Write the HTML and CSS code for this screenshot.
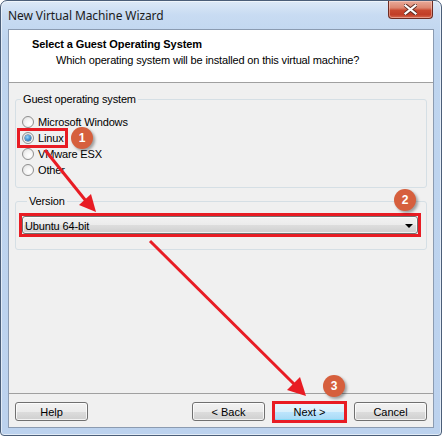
FILE: index.html
```html
<!DOCTYPE html>
<html>
<head>
<meta charset="utf-8">
<link rel="stylesheet" href="styles.css">
</head>
<body>
<div class="window">
  <div class="titlebar">
    <span class="title">New Virtual Machine Wizard</span>
    <div class="close">
      <svg width="13" height="11" viewBox="0 0 13 11">
        <path d="M1.5 1.5 L11.5 9.5 M11.5 1.5 L1.5 9.5" stroke="#5a2a22" stroke-width="4" stroke-linecap="square"/>
        <path d="M1.5 1.5 L11.5 9.5 M11.5 1.5 L1.5 9.5" stroke="#ffffff" stroke-width="2.2" stroke-linecap="square"/>
      </svg>
    </div>
  </div>
  <div class="client">
    <div class="header">
      <div class="h-title">Select a Guest Operating System</div>
      <div class="h-sub">Which operating system will be installed on this virtual machine?</div>
    </div>
    <div class="body">
      <fieldset class="group group-os">
        <legend>Guest operating system</legend>
        <div class="radios">
          <label class="radio"><span class="dot"></span>Microsoft Windows</label>
          <label class="radio mark"><span class="dot checked"></span>Linux</label>
          <label class="radio"><span class="dot"></span>VMware ESX</label>
          <label class="radio"><span class="dot"></span>Other</label>
        </div>
      </fieldset>
      <fieldset class="group group-ver">
        <legend>Version</legend>
        <div class="combo mark-combo">
          <span class="combo-text">Ubuntu 64-bit</span>
          <span class="caret"></span>
        </div>
      </fieldset>
    </div>
    <div class="footer">
      <button class="btn">Help</button>
      <div class="spacer"></div>
      <button class="btn">&lt; Back</button>
      <span class="mark-btn"><button class="btn default">Next &gt;</button></span>
      <button class="btn">Cancel</button>
    </div>
  </div>
  <div class="overlay">
    <svg class="arrows" width="442" height="436" viewBox="0 0 442 436">
      <line x1="45" y1="150" x2="86" y2="201" stroke="#e81c24" stroke-width="3"/>
      <polygon points="96,212 79,205 91,194" fill="#e81c24"/>
      <line x1="150" y1="241" x2="295" y2="385" stroke="#e81c24" stroke-width="3"/>
      <polygon points="306,396 287,390 300,377" fill="#e81c24"/>
    </svg>
    <div class="badge b1">1</div>
    <div class="badge b2">2</div>
    <div class="badge b3">3</div>
  </div>
</div>
</body>
</html>
```

FILE: styles.css
```css
* { box-sizing: border-box; }
html, body { margin: 0; padding: 0; }
body {
  width: 442px;
  height: 436px;
  overflow: hidden;
  background: #ffffff;
  font-family: "Liberation Sans", Arial, sans-serif;
  font-size: 11px;
  letter-spacing: -0.15px;
  color: #000;
}
.window {
  position: relative;
  width: 442px;
  height: 436px;
  border: 1px solid #4b5e78;
  border-radius: 7px 7px 4px 4px;
  background: linear-gradient(to bottom, #dde9f7 0px, #c8dbf2 14px, #bfd5ef 40px, #bcd2ee 100%);
  box-shadow: inset 0 0 0 1px rgba(255, 255, 255, 0.55);
  display: flex;
  flex-direction: column;
  padding: 0 7px 7px 7px;
}
.titlebar {
  height: 28px;
  display: flex;
  align-items: flex-start;
  justify-content: space-between;
}
.title {
  font-family: "Noto Sans", "Open Sans", sans-serif;
  font-size: 12px;
  letter-spacing: -0.1px;
  line-height: 16px;
  padding-top: 7px;
  color: #1b1b1b;
}
.close {
  width: 45px;
  height: 18px;
  margin-right: 1px;
  border: 1px solid #6e2c22;
  border-top: none;
  border-radius: 0 0 4px 4px;
  background: linear-gradient(to bottom, #e9ab9a 0%, #dc8670 40%, #c9482f 55%, #c13d26 80%, #d7694f 100%);
  box-shadow: inset 0 0 0 1px rgba(255, 220, 210, 0.45);
  display: flex;
  align-items: center;
  justify-content: center;
}
.client {
  flex: 1;
  border: 1px solid #8b9bb1;
  background: #f0f0f0;
  display: flex;
  flex-direction: column;
}
.header {
  height: 53px;
  background: #ffffff;
  border-bottom: 1px solid #a0a0a0;
  padding: 6px 0 0 23px;
  line-height: 16px;
}
.h-title { font-weight: bold; letter-spacing: -0.1px; }
.h-sub { padding-left: 24px; }
.body {
  flex: 1;
  padding: 10px 6px 0 6px;
  display: flex;
  flex-direction: column;
  gap: 7px;
}
.group {
  margin: 0;
  padding: 0;
  min-width: 0;
  border: 1px solid #d5dfe5;
  border-radius: 3px;
}
.group legend {
  margin-left: 5px;
  padding: 0 2px;
  line-height: 13px;
}
.radios {
  display: flex;
  flex-direction: column;
  align-items: flex-start;
  padding: 8px 0 9px 6px;
}
.radio {
  position: relative;
  height: 16px;
  display: inline-flex;
  align-items: center;
  gap: 4px;
}
.dot {
  position: relative;
  width: 12px;
  height: 12px;
  border-radius: 50%;
  border: 1px solid #8f8f8f;
  background: radial-gradient(circle at 65% 65%, #ffffff 0%, #f4f4f4 45%, #d9d9d9 100%);
}
.dot.checked::after {
  content: "";
  position: absolute;
  left: 2px;
  top: 2px;
  width: 6px;
  height: 6px;
  border-radius: 50%;
  background: radial-gradient(circle at 40% 35%, #9ad8fa 0%, #3c8dd0 55%, #1b4f86 100%);
  box-shadow: 0 0 0 0.5px #244d7a;
}
.mark::after {
  content: "";
  position: absolute;
  top: -2px;
  bottom: -2px;
  left: -5px;
  right: -4px;
  border: 3px solid #e81c24;
}
.group-ver { padding: 8px 8px 15px 6px; }
.combo {
  position: relative;
  height: 18px;
  border: 1px solid #707070;
  border-radius: 3px;
  background: linear-gradient(to bottom, #f2f2f2 0%, #ebebeb 50%, #dddddd 51%, #cfcfcf 100%);
  box-shadow: inset 0 0 0 1px rgba(255, 255, 255, 0.7);
  display: flex;
  align-items: center;
  justify-content: space-between;
  padding: 2px 4px 0 2px;
}
.mark-combo::after {
  content: "";
  position: absolute;
  top: -4px;
  bottom: -4px;
  left: -4px;
  right: -4px;
  border: 3px solid #e81c24;
}
.caret {
  width: 0;
  height: 0;
  border-left: 4px solid transparent;
  border-right: 4px solid transparent;
  border-top: 4px solid #000;
  margin-bottom: 1px;
}
.footer {
  border-top: 1px solid #a0a0a0;
  padding: 8px 6px 6px 6px;
  display: flex;
  gap: 8px;
}
.spacer { flex: 1; }
.btn {
  width: 73px;
  height: 19px;
  margin: 0;
  padding: 0;
  font-family: "Liberation Sans", Arial, sans-serif;
  font-size: 11px;
  color: #000;
  border: 1px solid #707070;
  border-radius: 3px;
  background: linear-gradient(to bottom, #f2f2f2 0%, #ebebeb 50%, #dddddd 51%, #cfcfcf 100%);
  box-shadow: inset 0 0 0 1px rgba(255, 255, 255, 0.75);
}
.btn.default {
  border-color: #3c7fb1;
  background: linear-gradient(to bottom, #eaf6fd 0%, #d9f0fc 50%, #bee6fd 51%, #a7d9f5 100%);
  box-shadow: inset 0 0 0 1px rgba(72, 220, 251, 0.4);
}
.mark-btn {
  position: relative;
  display: flex;
}
.mark-btn::after {
  content: "";
  position: absolute;
  top: -1px;
  bottom: -2px;
  left: -1px;
  right: -1px;
  border: 3px solid #e81c24;
}
.overlay {
  position: absolute;
  left: -1px;
  top: -1px;
  width: 442px;
  height: 436px;
  pointer-events: none;
}
.arrows { position: absolute; left: 0; top: 0; }
.badge {
  position: absolute;
  width: 22px;
  height: 22px;
  border-radius: 50%;
  background: #d65f3d;
  color: #fff;
  font-family: "Liberation Sans", Arial, sans-serif;
  font-weight: bold;
  font-size: 12px;
  letter-spacing: 0;
  line-height: 22px;
  text-align: center;
  box-shadow: 2px 2px 3px rgba(0, 0, 0, 0.35);
}
.b1 { left: 71px; top: 127px; }
.b2 { left: 394px; top: 189px; }
.b3 { left: 323px; top: 375px; }
```
